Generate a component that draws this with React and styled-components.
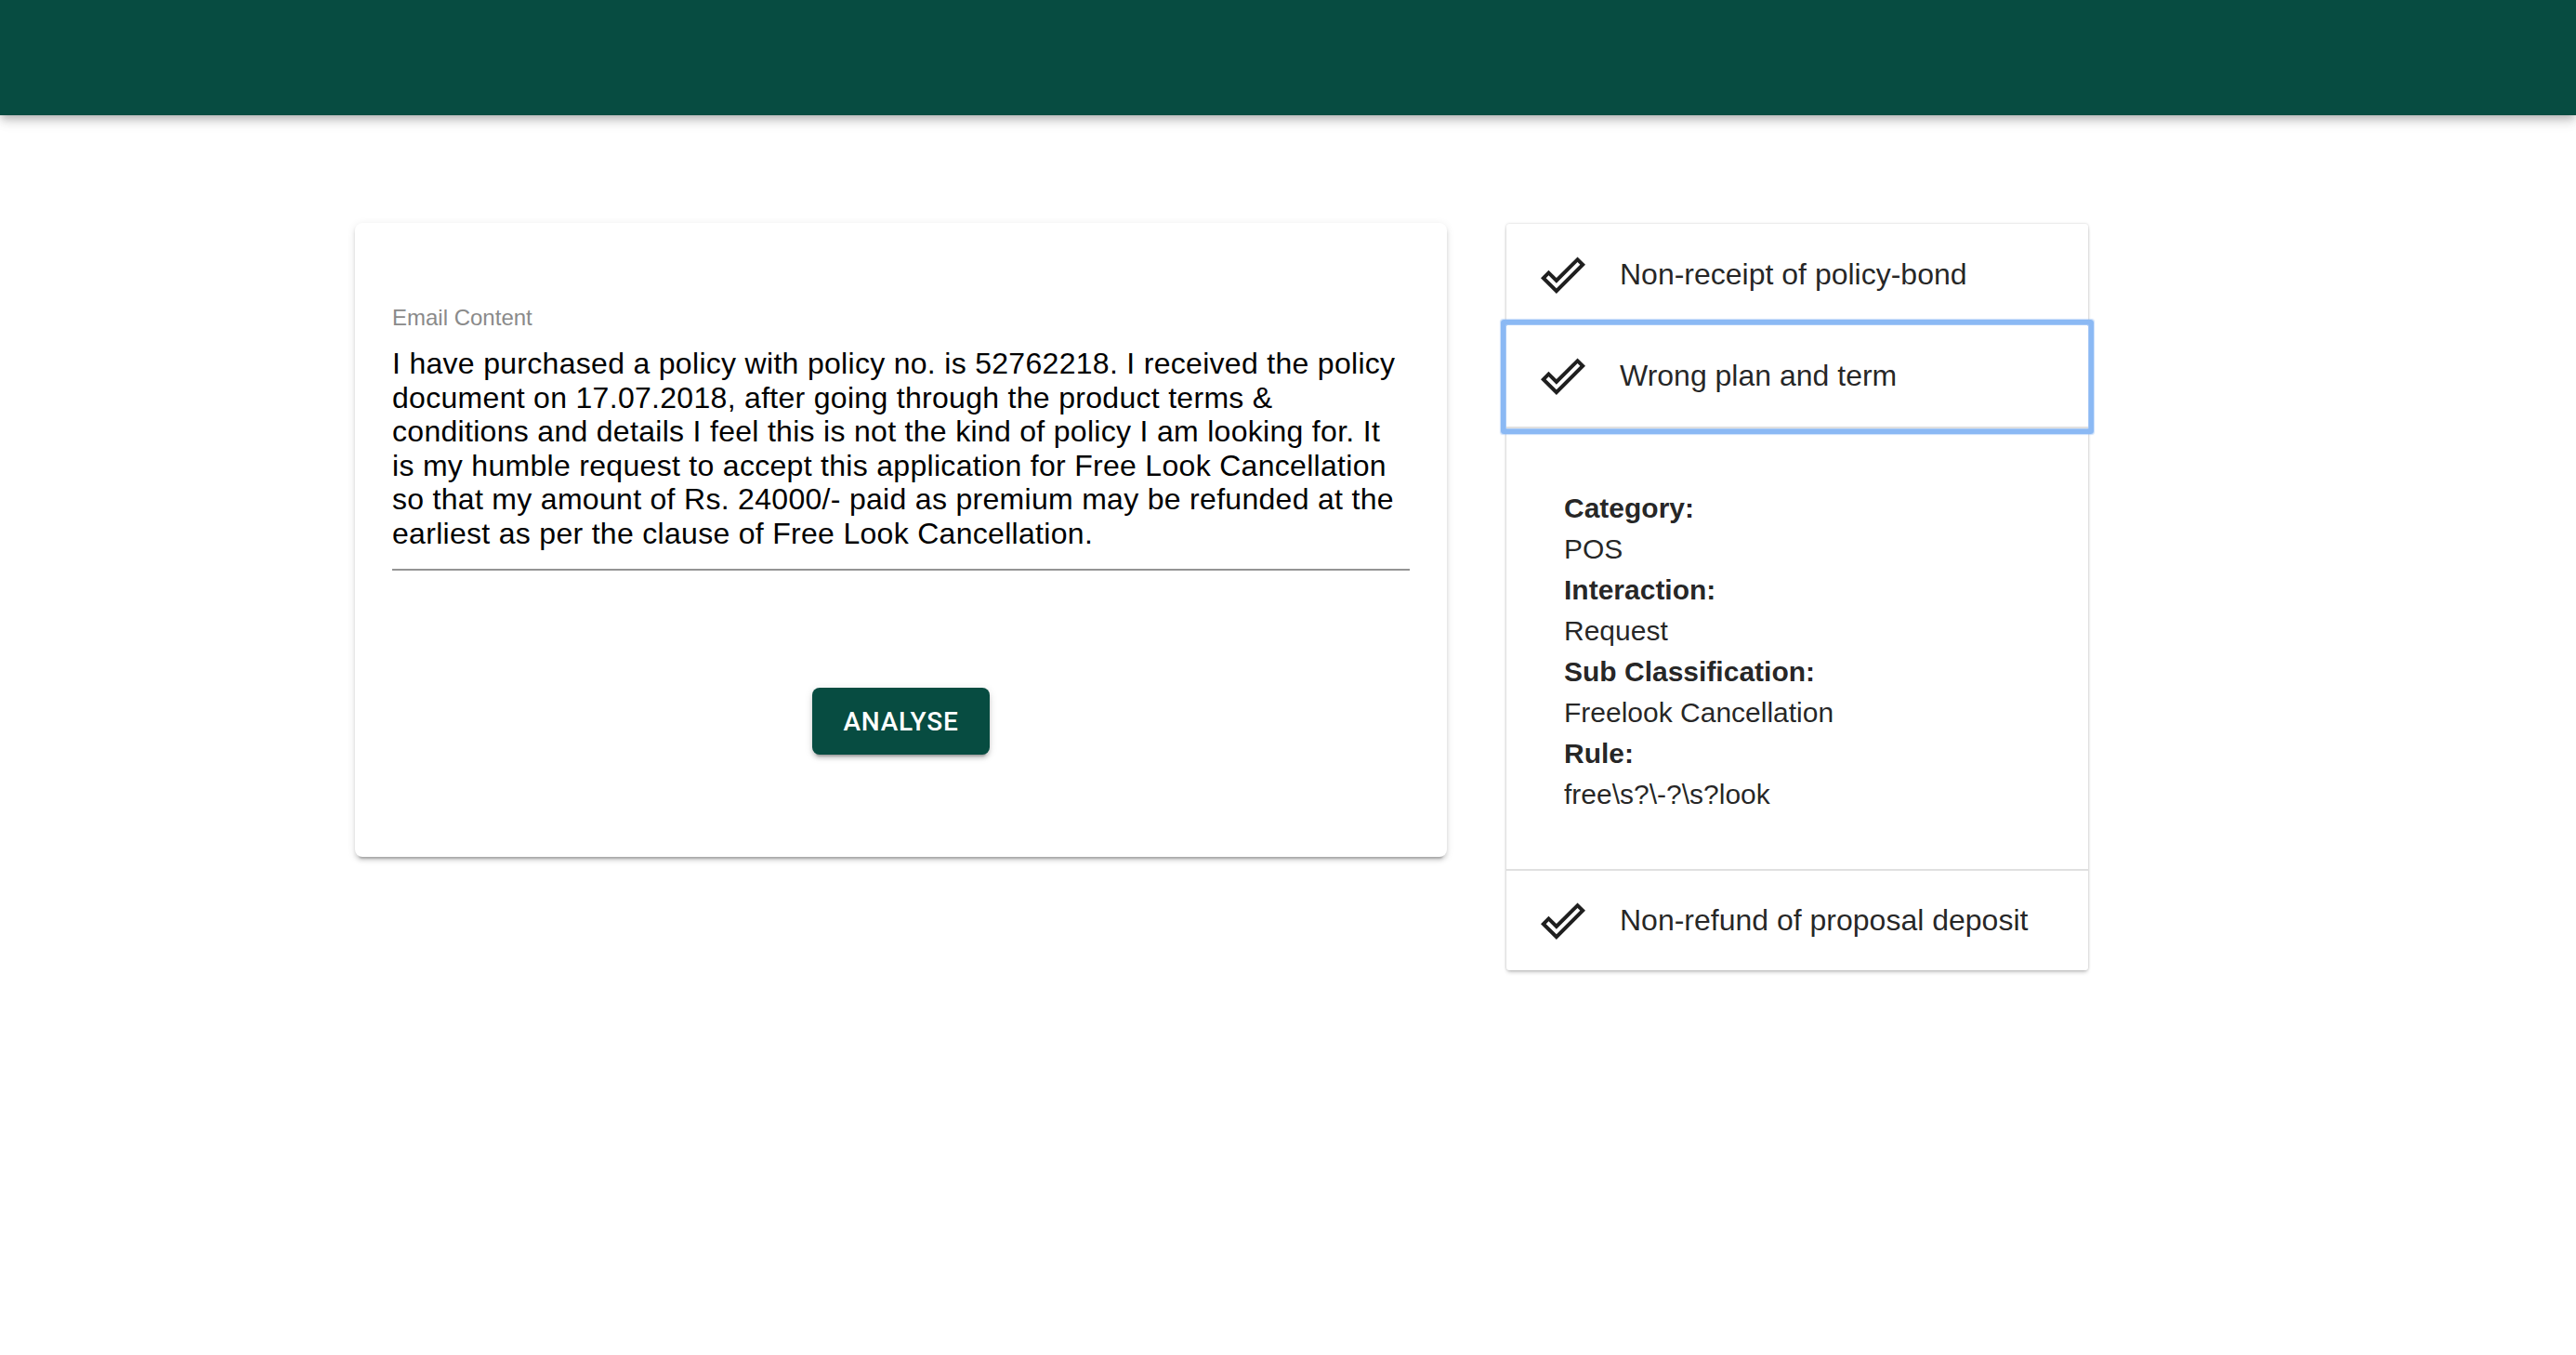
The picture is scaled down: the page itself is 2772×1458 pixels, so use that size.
import React from "react";
import styled, { createGlobalStyle, css } from "styled-components";

const GlobalStyle = createGlobalStyle`
  html, body {
    margin: 0;
    padding: 0;
    background: #ffffff;
  }
  body {
    font-family: "Liberation Sans", Arial, Helvetica, sans-serif;
    -webkit-font-smoothing: antialiased;
  }
`;

const Page = styled.div`
  min-height: 1458px;
  background: #ffffff;
`;

const AppBar = styled.header`
  position: relative;
  z-index: 2;
  height: 124px;
  background: #074c41;
  box-shadow: 0 4px 8px -2px rgba(0, 0, 0, 0.2), 0 8px 10px 0 rgba(0, 0, 0, 0.1),
    0 2px 20px 0 rgba(0, 0, 0, 0.08);
`;

const Main = styled.main`
  display: flex;
  align-items: flex-start;
  gap: 64px;
  padding: 116px 0 0 382px;
`;

const EmailCard = styled.section`
  box-sizing: border-box;
  width: 1175px;
  height: 682px;
  padding: 90px 40px 0;
  display: flex;
  flex-direction: column;
  background: #ffffff;
  border-radius: 8px;
  box-shadow: 0 2px 10px rgba(0, 0, 0, 0.1), 0 4px 4px rgba(0, 0, 0, 0.12),
    0 6px 2px -4px rgba(0, 0, 0, 0.2);
`;

const Field = styled.div`
  display: flex;
  flex-direction: column;
`;

const FieldLabel = styled.label`
  font-size: 24px;
  line-height: 24px;
  color: #8a8a8a;
`;

const FieldText = styled.div`
  margin-top: 19px;
  padding: 0 6px 20px 0;
  font-size: 32px;
  line-height: 36.5px;
  letter-spacing: 0.3px;
  color: #000000;
  border-bottom: 2px solid #949494;
`;

const AnalyseButton = styled.button`
  align-self: center;
  margin-top: 126px;
  width: 191px;
  height: 72px;
  border: none;
  border-radius: 8px;
  background: #074c41;
  color: #ffffff;
  font-family: Roboto, "Liberation Sans", Arial, sans-serif;
  font-weight: 500;
  font-size: 28px;
  letter-spacing: 0.8px;
  text-transform: uppercase;
  cursor: pointer;
  box-shadow: 0 2px 10px rgba(0, 0, 0, 0.12), 0 4px 4px rgba(0, 0, 0, 0.14),
    0 6px 2px -4px rgba(0, 0, 0, 0.2);
`;

const ResultCard = styled.section`
  box-sizing: border-box;
  width: 626px;
  margin-top: 1px;
  display: flex;
  flex-direction: column;
  background: #ffffff;
  border-radius: 3px;
  box-shadow: 0 0 3px rgba(0, 0, 0, 0.2), 0 3px 4px -1px rgba(0, 0, 0, 0.22);
`;

const Item = styled.div`
  position: relative;
  box-sizing: border-box;
  display: flex;
  align-items: center;
  gap: 37px;
  height: ${(p) => p.$height}px;
  padding: 0 37px;
  font-size: 32px;
  color: rgba(0, 0, 0, 0.87);
  border-bottom: ${(p) => (p.$divider ? "2px solid #e0e0e0" : "none")};
  ${(p) =>
    p.$focused &&
    css`
      z-index: 1;
      border-radius: 1px;
      box-shadow: 0 0 0 1px #a7c9f6, 0 0 0 6px #8bb9f4,
        0 0 1px 7px rgba(139, 185, 244, 0.45);
    `}
`;

const IconBox = styled.svg`
  flex: none;
  width: 48px;
  height: 48px;
  fill: #1f1f1f;
`;

const Details = styled.dl`
  margin: 0;
  padding: 64px 62px 58px;
  font-size: 30px;
  line-height: 44px;
  color: rgba(0, 0, 0, 0.87);
  border-bottom: 2px solid #e0e0e0;
`;

const Term = styled.dt`
  font-weight: 700;
`;

const Value = styled.dd`
  margin: 0;
`;

const DoneOutline = () => (
  <IconBox viewBox="0 0 24 24" aria-hidden="true">
    <path d="M19.77 5.03l1.4 1.4L8.43 19.17l-5.6-5.6 1.4-1.4 4.2 4.2L19.77 5.03m0-2.83L8.43 13.54l-4.2-4.2L0 13.57 8.43 22 24 6.43 19.77 2.2z" />
  </IconBox>
);

const details = [
  ["Category:", "POS"],
  ["Interaction:", "Request"],
  ["Sub Classification:", "Freelook Cancellation"],
  ["Rule:", "free\\s?\\-?\\s?look"],
];

export default function App() {
  return (
    <Page>
      <GlobalStyle />
      <AppBar />
      <Main>
        <EmailCard>
          <Field>
            <FieldLabel>Email Content</FieldLabel>
            <FieldText>
              I have purchased a policy with policy no. is 52762218. I received the
              policy document on 17.07.2018, after going through the product terms
              &amp; conditions and details I feel this is not the kind of policy I am
              looking for. It is my humble request to accept this application for
              Free Look Cancellation so that my amount of Rs. 24000/- paid as premium
              may be refunded at the earliest as per the clause of Free Look
              Cancellation.
            </FieldText>
          </Field>
          <AnalyseButton>Analyse</AnalyseButton>
        </EmailCard>
        <ResultCard>
          <Item $height={109}>
            <DoneOutline />
            <span>Non-receipt of policy-bond</span>
          </Item>
          <Item $height={111} $divider $focused>
            <DoneOutline />
            <span>Wrong plan and term</span>
          </Item>
          <Details>
            {details.map(([t, v]) => (
              <React.Fragment key={t}>
                <Term>{t}</Term>
                <Value>{v}</Value>
              </React.Fragment>
            ))}
          </Details>
          <Item $height={107}>
            <DoneOutline />
            <span>Non-refund of proposal deposit</span>
          </Item>
        </ResultCard>
      </Main>
    </Page>
  );
}
